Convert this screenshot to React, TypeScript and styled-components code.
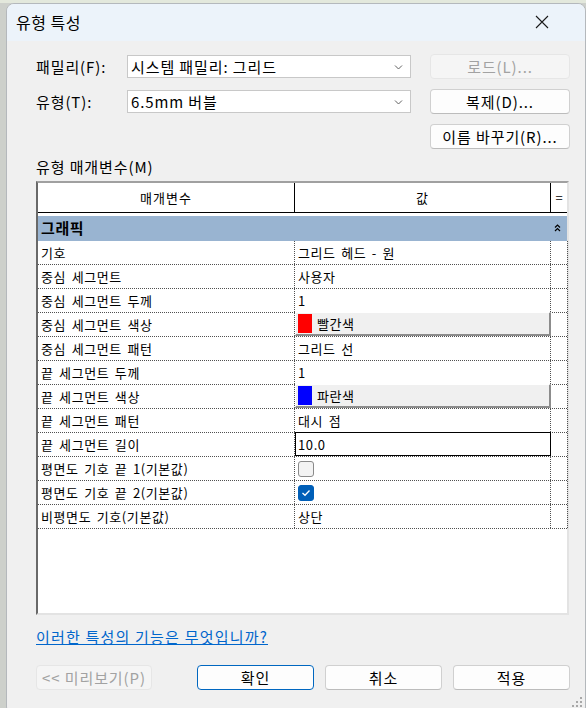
import styled, { createGlobalStyle } from "styled-components";

const GlobalStyle = createGlobalStyle`
  html, body {
    margin: 0;
    padding: 0;
    background: #d3d6d0;
    overflow: hidden;
  }
  body {
    font-family: "Noto Sans CJK KR", "Noto Sans", sans-serif;
    color: #000;
  }
`;

const FONT = `"Noto Sans CJK KR", "Noto Sans", sans-serif`;

const Page = styled.div`
  width: 586px;
  height: 708px;
  padding: 3px 0 0 6px;
  box-sizing: border-box;
  background: linear-gradient(to bottom, #e3e8dc 0, #e3e8dc 3px, #cdd0cb 3px);
  overflow: hidden;
`;

const Window = styled.div`
  position: relative;
  width: 580px;
  height: 712px;
  display: flex;
  flex-direction: column;
  background: #f0f0f0;
  border: 1px solid #b4b8bc;
  border-radius: 8px;
  box-sizing: border-box;
  overflow: hidden;
  font-size: 15px;
  letter-spacing: 0.9px;
`;

const TitleBar = styled.div`
  height: 37px;
  flex-shrink: 0;
  display: flex;
  align-items: center;
  justify-content: space-between;
  padding: 0 0 2px 9px;
  box-sizing: border-box;
  background: #ecf3fa;
  font-size: 16px;
  letter-spacing: 0.5px;
`;

const CloseButton = styled.div`
  width: 46px;
  height: 35px;
  display: flex;
  align-items: center;
  justify-content: center;
  margin-right: 20px;
`;

const Body = styled.div`
  flex: 1;
  display: flex;
  flex-direction: column;
  padding: 13px 14px 0 29px;
`;

const TopGrid = styled.div`
  display: grid;
  grid-template-columns: 91px 284px 159px;
  grid-template-rows: 25px 25px 25px;
  row-gap: 10px;
  align-items: center;
`;

const Label = styled.div`
  line-height: 18px;
`;

const Combo = styled.div`
  height: 23px;
  box-sizing: border-box;
  background: #fff;
  border: 1px solid #c8c8c8;
  display: flex;
  align-items: center;
  justify-content: space-between;
  padding: 0 7px 0 3px;
  white-space: nowrap;
`;

const Button = styled.div<{ $disabled?: boolean; $primary?: boolean; $w?: number }>`
  height: 25px;
  width: ${(p) => (p.$w ? `${p.$w}px` : "140px")};
  justify-self: end;
  box-sizing: border-box;
  display: flex;
  align-items: center;
  justify-content: center;
  white-space: nowrap;
  border-radius: 4px;
  background: ${(p) => (p.$disabled ? "#f5f5f5" : "#fdfdfd")};
  color: ${(p) => (p.$disabled ? "#a2a2a2" : "#000")};
  border: 1px solid
    ${(p) => (p.$primary ? "#0067c0" : p.$disabled ? "#e6e6e6" : "#d0d0d0")};
  border-bottom-color: ${(p) =>
    p.$primary ? "#0067c0" : p.$disabled ? "#e6e6e6" : "#bcbcbc"};
`;

const SectionLabel = styled.div`
  line-height: 18px;
  margin-top: 9px;
`;

const Table = styled.div`
  margin-top: 5px;
  width: 533px;
  height: 434px;
  box-sizing: border-box;
  background: #fff;
  border-top: 2px solid #a0a0a0;
  border-left: 2px solid #696969;
  border-right: 2px solid #e3e3e3;
  border-bottom: 2px solid #e3e3e3;
  display: flex;
  flex-direction: column;
  font-family: ${FONT};
  font-size: 13px;
  letter-spacing: 0.6px;
  word-spacing: 2px;
`;

const HeaderRow = styled.div`
  display: grid;
  grid-template-columns: 257px 256px 17px;
  height: 29px;
  border-bottom: 1px solid #000;
  margin-bottom: 3px;
`;

const HeaderCell = styled.div<{ $last?: boolean }>`
  display: flex;
  align-items: center;
  justify-content: center;
  letter-spacing: 1px;
  border-right: ${(p) => (p.$last ? "none" : "1px solid #000")};
`;

const GroupRow = styled.div`
  height: 25px;
  background: #99b4d1;
  display: flex;
  align-items: center;
  justify-content: space-between;
  padding: 0 6px 2px 3px;
  box-sizing: border-box;
  font-size: 15px;
  font-weight: 700;
`;

const Row = styled.div`
  display: grid;
  grid-template-columns: 257px 256px 17px;
  height: 24px;
  box-sizing: border-box;
  border-bottom: 1px dotted #505050;
`;

const Cell = styled.div`
  display: flex;
  align-items: center;
  padding-left: 3px;
  border-right: 1px dotted #505050;
  overflow: hidden;
  white-space: nowrap;
`;

const ColorCell = styled.div`
  display: flex;
  align-items: center;
  gap: 5px;
  padding-left: 2px;
  background: #f0f0f0;
  border-top: 1px solid #ffffff;
  border-left: 1px solid #ffffff;
  border-right: 2px solid #8c8c8c;
  border-bottom: 2px solid #8c8c8c;
  margin-top: -1px;
`;

const Swatch = styled.div<{ $color: string }>`
  width: 14px;
  height: 19px;
  background: ${(p) => p.$color};
`;

const EditCell = styled.div`
  display: flex;
  align-items: center;
  padding-left: 2px;
  border: 1px solid #000;
  margin-top: -1px;
`;

const Check = styled.div<{ $checked?: boolean }>`
  width: 16px;
  height: 16px;
  box-sizing: border-box;
  border-radius: 3px;
  display: flex;
  align-items: center;
  justify-content: center;
  background: ${(p) => (p.$checked ? "#005fb8" : "#f3f3f3")};
  border: 1px solid ${(p) => (p.$checked ? "#005fb8" : "#8a8a8a")};
`;

const Link = styled.a`
  margin-top: 12px;
  line-height: 20px;
  color: #0066cc;
  text-decoration: underline;
  align-self: flex-start;
  letter-spacing: 1.2px;
`;

const Footer = styled.div`
  margin-top: 18px;
  display: flex;
  justify-content: space-between;
  width: 534px;
`;

const FooterRight = styled.div`
  display: flex;
  gap: 11px;
`;

const Grip = styled.svg`
  position: absolute;
  right: 2px;
  bottom: 5px;
`;

type RowData = {
  name: string;
  value?: string;
  kind?: "text" | "color" | "edit" | "check";
  color?: string;
  checked?: boolean;
};

const rows: RowData[] = [
  { name: "기호", value: "그리드 헤드 - 원" },
  { name: "중심 세그먼트", value: "사용자" },
  { name: "중심 세그먼트 두께", value: "1" },
  { name: "중심 세그먼트 색상", value: "빨간색", kind: "color", color: "#ff0000" },
  { name: "중심 세그먼트 패턴", value: "그리드 선" },
  { name: "끝 세그먼트 두께", value: "1" },
  { name: "끝 세그먼트 색상", value: "파란색", kind: "color", color: "#0000ff" },
  { name: "끝 세그먼트 패턴", value: "대시 점" },
  { name: "끝 세그먼트 길이", value: "10.0", kind: "edit" },
  { name: "평면도 기호 끝 1(기본값)", kind: "check", checked: false },
  { name: "평면도 기호 끝 2(기본값)", kind: "check", checked: true },
  { name: "비평면도 기호(기본값)", value: "상단" },
];

const Chevron = () => (
  <svg width="9" height="6" viewBox="0 0 9 6">
    <path d="M1 1.5 L4.5 5 L8 1.5" fill="none" stroke="#606060" strokeWidth="1" />
  </svg>
);

function ValueCell({ r }: { r: RowData }) {
  if (r.kind === "color") {
    return (
      <ColorCell>
        <Swatch $color={r.color!} />
        {r.value}
      </ColorCell>
    );
  }
  if (r.kind === "edit") return <EditCell>{r.value}</EditCell>;
  if (r.kind === "check") {
    return (
      <Cell>
        <Check $checked={r.checked}>
          {r.checked && (
            <svg width="10" height="8" viewBox="0 0 10 8">
              <path d="M1.5 4 L4 6.3 L8.5 1.5" fill="none" stroke="#fff" strokeWidth="1.3" />
            </svg>
          )}
        </Check>
      </Cell>
    );
  }
  return <Cell>{r.value}</Cell>;
}

export default function App() {
  return (
    <>
      <GlobalStyle />
      <Page>
        <Window>
          <TitleBar>
            <span>유형 특성</span>
            <CloseButton>
              <svg width="14" height="14" viewBox="0 0 14 14">
                <path d="M1 1 L13 13 M13 1 L1 13" stroke="#1a1a1a" strokeWidth="1.1" />
              </svg>
            </CloseButton>
          </TitleBar>
          <Body>
            <TopGrid>
              <Label>패밀리(F):</Label>
              <Combo>
                <span>시스템 패밀리: 그리드</span>
                <Chevron />
              </Combo>
              <Button $disabled>로드(L)...</Button>
              <Label>유형(T):</Label>
              <Combo>
                <span>6.5mm 버블</span>
                <Chevron />
              </Combo>
              <Button>복제(D)...</Button>
              <span />
              <span />
              <Button>이름 바꾸기(R)...</Button>
            </TopGrid>
            <SectionLabel>유형 매개변수(M)</SectionLabel>
            <Table>
              <HeaderRow>
                <HeaderCell>매개변수</HeaderCell>
                <HeaderCell>값</HeaderCell>
                <HeaderCell $last>=</HeaderCell>
              </HeaderRow>
              <GroupRow>
                <span>그래픽</span>
                <svg width="7" height="8" viewBox="0 0 7 8">
                  <path d="M1 3.5 L3.5 1 L6 3.5 M1 7 L3.5 4.5 L6 7" fill="none" stroke="#000" strokeWidth="1.2" />
                </svg>
              </GroupRow>
              {rows.map((r) => (
                <Row key={r.name}>
                  <Cell>{r.name}</Cell>
                  <ValueCell r={r} />
                  <Cell />
                </Row>
              ))}
            </Table>
            <Link>이러한 특성의 기능은 무엇입니까?</Link>
            <Footer>
              <Button $disabled $w={116}>
                &lt;&lt; 미리보기(P)
              </Button>
              <FooterRight>
                <Button $primary $w={117}>확인</Button>
                <Button $w={117}>취소</Button>
                <Button $w={117}>적용</Button>
              </FooterRight>
            </Footer>
          </Body>
          <Grip width="13" height="12" viewBox="0 0 13 12">
            <g fill="#a8a8a8">
              <rect x="10" y="0" width="2" height="2" />
              <rect x="6" y="4" width="2" height="2" />
              <rect x="10" y="4" width="2" height="2" />
              <rect x="2" y="8" width="2" height="2" />
              <rect x="6" y="8" width="2" height="2" />
              <rect x="10" y="8" width="2" height="2" />
            </g>
          </Grip>
        </Window>
      </Page>
    </>
  );
}
